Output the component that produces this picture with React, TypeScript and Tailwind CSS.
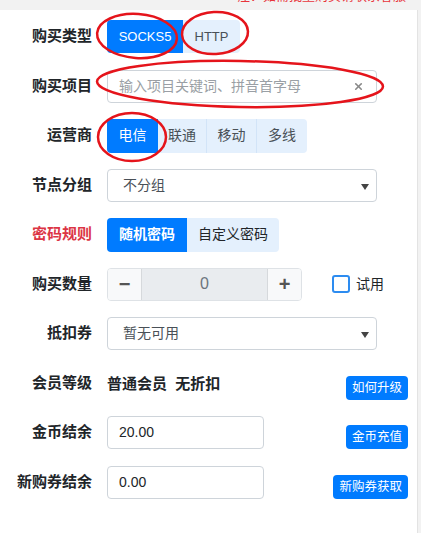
import { X } from 'lucide-react'

const font = { fontFamily: '"Liberation Sans", "Noto Sans CJK SC", sans-serif' }

function Label({ text, red }: { text: string; red?: boolean }) {
  return (
    <div
      className={`w-[92px] shrink-0 text-right text-[15px] font-semibold ${red ? 'text-[#dc3545]' : 'text-[#212529]'}`}
    >
      {text}
    </div>
  )
}

function Caret() {
  return (
    <svg width="8" height="6" viewBox="0 0 8 6" className="absolute right-[7px] top-[14px]">
      <path d="M0 0 L8 0 L4 6 Z" fill="#444" />
    </svg>
  )
}

function Select({ value }: { value: string }) {
  return (
    <div className="relative flex h-[33px] w-[270px] items-center rounded border border-[#ced4da] bg-white pl-[15px] text-[14px] text-[#495057]">
      {value}
      <Caret />
    </div>
  )
}

function SmallButton({ text }: { text: string }) {
  return (
    <div className="ml-auto self-end rounded bg-[#007bff] px-[6px] py-[3px] text-[12.5px] leading-[18px] text-white">
      {text}
    </div>
  )
}

export default function App() {
  return (
    <div className="relative h-[533px] w-[421px] overflow-hidden bg-[#f2f2f2]" style={font}>
      {/* cut-off notice above the card */}
      <div className="h-[10px] overflow-hidden pl-[237px]">
        <div className="-mt-[11px] whitespace-nowrap text-[13px] leading-[14px] text-[#e8353c]">
          注：如需批量购买请联系客服　　注
        </div>
      </div>

      <div className="h-[523px] w-[418px] border-r border-[#e3e3e3] bg-white pt-[10px] pr-[9px]">
        <div className="flex flex-col gap-[16.5px]">
          {/* 购买类型 */}
          <div className="flex h-[33px] items-center gap-[15px]">
            <Label text="购买类型" />
            <div className="flex h-[33px] text-[13px]">
              <div className="flex w-[76px] items-center justify-center rounded-l bg-[#007bff] text-white">SOCKS5</div>
              <div className="flex w-[57px] items-center justify-center rounded-r bg-[#e4f0fd] text-[#495057]">HTTP</div>
            </div>
          </div>

          {/* 购买项目 */}
          <div className="flex h-[33px] items-center gap-[15px]">
            <Label text="购买项目" />
            <div className="flex h-[33px] w-[270px] items-center rounded border border-[#ced4da] pl-[11px] pr-[12px] text-[14px] text-[#9a9fa5]">
              <span className="flex-1">输入项目关键词、拼音首字母</span>
              <X size={11} strokeWidth={3.5} className="text-[#888]" />
            </div>
          </div>

          {/* 运营商 */}
          <div className="flex h-[33px] items-center gap-[15px]">
            <Label text="运营商" />
            <div className="flex h-[34px] text-[14px] text-[#495057]">
              <div className="flex w-[51px] items-center justify-center rounded-l bg-[#007bff] text-white">电信</div>
              <div className="flex w-[49px] items-center justify-center border-r border-[#d2e4f8] bg-[#e4f0fd]">联通</div>
              <div className="flex w-[50px] items-center justify-center border-r border-[#d2e4f8] bg-[#e4f0fd]">移动</div>
              <div className="flex w-[50px] items-center justify-center rounded-r bg-[#e4f0fd]">多线</div>
            </div>
          </div>

          {/* 节点分组 */}
          <div className="flex h-[33px] items-center gap-[15px]">
            <Label text="节点分组" />
            <Select value="不分组" />
          </div>

          {/* 密码规则 */}
          <div className="flex h-[33px] items-center gap-[15px]">
            <Label text="密码规则" red />
            <div className="flex h-[34px] text-[14px]">
              <div className="flex items-center rounded-l bg-[#007bff] px-[12px] font-semibold text-white">随机密码</div>
              <div className="flex items-center rounded-r bg-[#e4f0fd] px-[11px] text-[#212529]">自定义密码</div>
            </div>
          </div>

          {/* 购买数量 */}
          <div className="flex h-[33px] items-center gap-[15px]">
            <Label text="购买数量" />
            <div className="flex h-[33px] w-[195px] overflow-hidden rounded border border-[#dee2e6] text-[#495057]">
              <div className="flex w-[33px] items-center justify-center bg-[#f8f9fa] text-[20px] font-bold text-[#555]">−</div>
              <div className="flex flex-1 items-center justify-center border-x border-[#d6d9dc] bg-[#e9ecef] text-[16px] text-[#6c757d]">0</div>
              <div className="flex w-[33px] items-center justify-center bg-[#f8f9fa] text-[20px] font-bold text-[#555]">+</div>
            </div>
            <div className="ml-[15px] flex items-center gap-[6px]">
              <div className="h-[18px] w-[18px] rounded-[3px] border-2 border-[#2d8cf0] bg-white" />
              <span className="text-[14px] text-[#212529]">试用</span>
            </div>
          </div>

          {/* 抵扣券 */}
          <div className="flex h-[33px] items-center gap-[15px]">
            <Label text="抵扣券" />
            <Select value="暂无可用" />
          </div>

          {/* 会员等级 */}
          <div className="flex h-[33px] items-center gap-[15px]">
            <Label text="会员等级" />
            <div className="mt-[3px] text-[15px] font-semibold text-[#212529]">普通会员&nbsp;&nbsp;无折扣</div>
            <SmallButton text="如何升级" />
          </div>

          {/* 金币结余 */}
          <div className="flex h-[33px] items-center gap-[15px]">
            <Label text="金币结余" />
            <div className="flex h-[33px] w-[157px] items-center rounded border border-[#ced4da] pl-[11px] text-[14px] text-[#212529]">
              20.00
            </div>
            <SmallButton text="金币充值" />
          </div>

          {/* 新购券结余 */}
          <div className="flex h-[33px] items-center gap-[15px]">
            <Label text="新购券结余" />
            <div className="flex h-[33px] w-[157px] items-center rounded border border-[#ced4da] pl-[11px] text-[14px] text-[#212529]">
              0.00
            </div>
            <SmallButton text="新购券获取" />
          </div>
        </div>
      </div>

      {/* hand-drawn red annotations */}
      <svg className="pointer-events-none absolute left-0 top-0" width="421" height="533" viewBox="0 0 421 533">
        <g fill="none" stroke="#e5141b" strokeWidth="2.5">
          <ellipse cx="137" cy="36" rx="40" ry="22" transform="rotate(4 137 36)" />
          <ellipse cx="215" cy="33" rx="33" ry="21" transform="rotate(-3 215 33)" />
          <ellipse cx="240" cy="84" rx="143" ry="23" transform="rotate(1 240 84)" />
          <ellipse cx="132" cy="137" rx="34" ry="24" />
        </g>
      </svg>
    </div>
  )
}
